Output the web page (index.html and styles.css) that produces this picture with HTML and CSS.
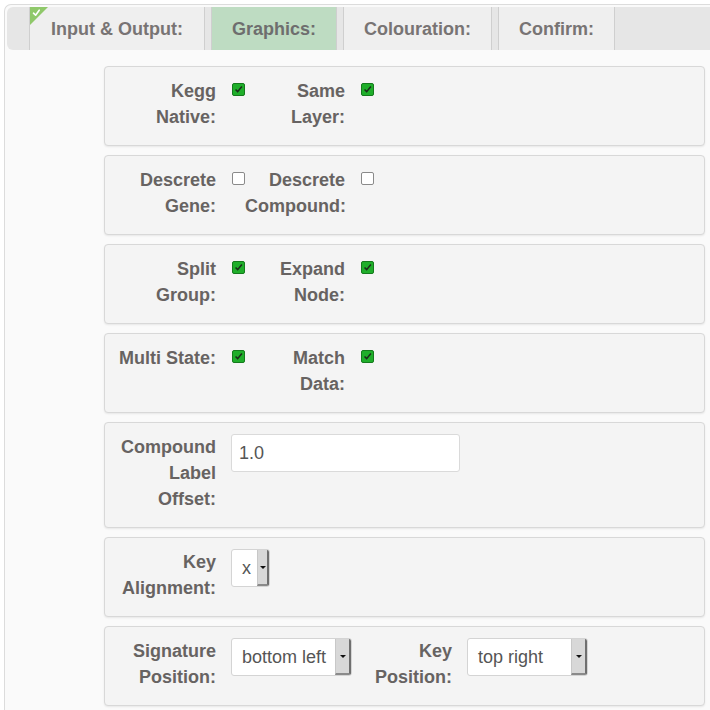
FILE: index.html
```html
<!DOCTYPE html>
<html>
<head>
<meta charset="utf-8">
<link rel="stylesheet" href="styles.css">
</head>
<body>
<div class="wizard">
  <div class="tabs">
    <div class="tab done">
      <svg class="badge" width="18" height="18" viewBox="0 0 18 18"><path d="M0 0H18L0 18Z" fill="#8fc86a"/><path d="M3.5 6.2L5.6 8.2L9.2 3.2" fill="none" stroke="#fff" stroke-width="1.6" stroke-linecap="round" stroke-linejoin="round"/></svg>
      Input &amp; Output:
    </div>
    <div class="tab active">Graphics:</div>
    <div class="tab">Colouration:</div>
    <div class="tab">Confirm:</div>
  </div>
  <div class="content">
    <div class="panel">
      <div class="row">
        <label class="lbl">Kegg Native:</label>
        <span class="cb on"><svg viewBox="0 0 13 13"><path d="M3 6.5L5.5 9L10.5 3" fill="none" stroke="#1c2a1c" stroke-width="1.8"/></svg></span>
        <label class="lbl">Same Layer:</label>
        <span class="cb on"><svg viewBox="0 0 13 13"><path d="M3 6.5L5.5 9L10.5 3" fill="none" stroke="#1c2a1c" stroke-width="1.8"/></svg></span>
      </div>
    </div>
    <div class="panel">
      <div class="row">
        <label class="lbl">Descrete Gene:</label>
        <span class="cb"></span>
        <label class="lbl">Descrete Compound:</label>
        <span class="cb"></span>
      </div>
    </div>
    <div class="panel">
      <div class="row">
        <label class="lbl">Split Group:</label>
        <span class="cb on"><svg viewBox="0 0 13 13"><path d="M3 6.5L5.5 9L10.5 3" fill="none" stroke="#1c2a1c" stroke-width="1.8"/></svg></span>
        <label class="lbl">Expand Node:</label>
        <span class="cb on"><svg viewBox="0 0 13 13"><path d="M3 6.5L5.5 9L10.5 3" fill="none" stroke="#1c2a1c" stroke-width="1.8"/></svg></span>
      </div>
    </div>
    <div class="panel">
      <div class="row">
        <label class="lbl">Multi State:</label>
        <span class="cb on"><svg viewBox="0 0 13 13"><path d="M3 6.5L5.5 9L10.5 3" fill="none" stroke="#1c2a1c" stroke-width="1.8"/></svg></span>
        <label class="lbl">Match Data:</label>
        <span class="cb on"><svg viewBox="0 0 13 13"><path d="M3 6.5L5.5 9L10.5 3" fill="none" stroke="#1c2a1c" stroke-width="1.8"/></svg></span>
      </div>
    </div>
    <div class="panel">
      <div class="row">
        <label class="lbl">Compound Label Offset:</label>
        <input class="txt" type="text" value="1.0">
      </div>
    </div>
    <div class="panel">
      <div class="row">
        <label class="lbl">Key Alignment:</label>
        <span class="sel w-xs"><span class="val">x</span><span class="btn"></span></span>
      </div>
    </div>
    <div class="panel">
      <div class="row">
        <label class="lbl">Signature Position:</label>
        <span class="sel w-md"><span class="val">bottom left</span><span class="btn"></span></span>
        <label class="lbl">Key Position:</label>
        <span class="sel w-md"><span class="val">top right</span><span class="btn"></span></span>
      </div>
    </div>
  </div>
</div>
</body>
</html>
```

FILE: styles.css
```css
html, body {
  margin: 0;
  padding: 0;
  background: #ffffff;
  font-family: "Liberation Sans", Arial, sans-serif;
  overflow: hidden;
}

.wizard {
  margin: 4px 0 0 4px;
  width: 740px;
  border: 1px solid #dcdcdc;
  border-right: none;
  border-radius: 7px 0 0 0;
  padding: 2px 0 0 2px;
  background: #fafafa;
}

.tabs {
  display: flex;
  height: 43px;
  background: #e6e6e6;
  border-radius: 6px 0 0 6px;
  padding-left: 22px;
}

.tab {
  position: relative;
  padding: 0 20px;
  background: #efefef;
  border-left: 1px solid #cfcfcf;
  border-right: 1px solid #cfcfcf;
  margin-right: 6px;
  font-size: 18px;
  font-weight: bold;
  line-height: 44px;
  color: #787474;
  white-space: nowrap;
}

.tab:first-child {
  padding: 0 21px;
}

.tab:last-child {
  margin-right: 0;
}

.tab.active {
  background: #bedcc2;
  color: #6e6e6e;
}

.badge {
  position: absolute;
  top: 0;
  left: 0;
}

.content {
  padding: 16px 0 40px 97px;
}

.panel {
  box-sizing: border-box;
  width: 601px;
  background: #f4f4f4;
  border: 1px solid #d8d8d8;
  border-radius: 4px;
  box-shadow: 0 1px 2px rgba(0, 0, 0, 0.08);
  padding: 11px 0 15px 11px;
  margin-bottom: 9px;
}

.row {
  display: flex;
  align-items: flex-start;
}

.lbl {
  flex: 0 0 100px;
  width: 100px;
  text-align: right;
  font-size: 18px;
  font-weight: bold;
  line-height: 26px;
  color: #676362;
}

.cb {
  box-sizing: border-box;
  flex: 0 0 13px;
  width: 13px;
  height: 13px;
  margin: 5px 0 0 16px;
  border: 1px solid #8a8a8a;
  border-radius: 2px;
  background: #ffffff;
}

.cb.on {
  background: #1fae2a;
  border-color: #157a1d;
}

.cb svg {
  display: block;
  width: 11px;
  height: 11px;
}

.txt {
  box-sizing: border-box;
  width: 229px;
  height: 38px;
  margin: 0 0 0 15px;
  padding: 0 7px;
  border: 1px solid #dadada;
  border-radius: 3px;
  background: #ffffff;
  font-family: "Liberation Sans", Arial, sans-serif;
  font-size: 18px;
  color: #555555;
  outline: none;
}

.sel {
  box-sizing: border-box;
  display: flex;
  height: 38px;
  margin: 0 0 0 15px;
  border: 1px solid #d4d4d4;
  border-radius: 3px;
  background: #ffffff;
  font-size: 18px;
  color: #555555;
}

.sel .val {
  flex: 1;
  padding-left: 10px;
  line-height: 36px;
  white-space: nowrap;
}

.sel .btn {
  position: relative;
  box-sizing: border-box;
  flex: 0 0 12px;
  background: #d8d8d8;
  border-right: 2px solid #6f6f6f;
  border-bottom: 2px solid #8a8a8a;
  border-left: 1px solid #c8c8c8;
  border-radius: 0 2px 2px 0;
}

.sel .btn::after {
  content: "";
  position: absolute;
  left: 2px;
  top: 16px;
  border-left: 3px solid transparent;
  border-right: 3px solid transparent;
  border-top: 3px solid #111;
}

.w-xs {
  width: 39px;
}

.w-md {
  width: 121px;
}

.w-md .btn {
  flex-basis: 16px;
}

.w-md .btn::after {
  left: 4px;
}
```
